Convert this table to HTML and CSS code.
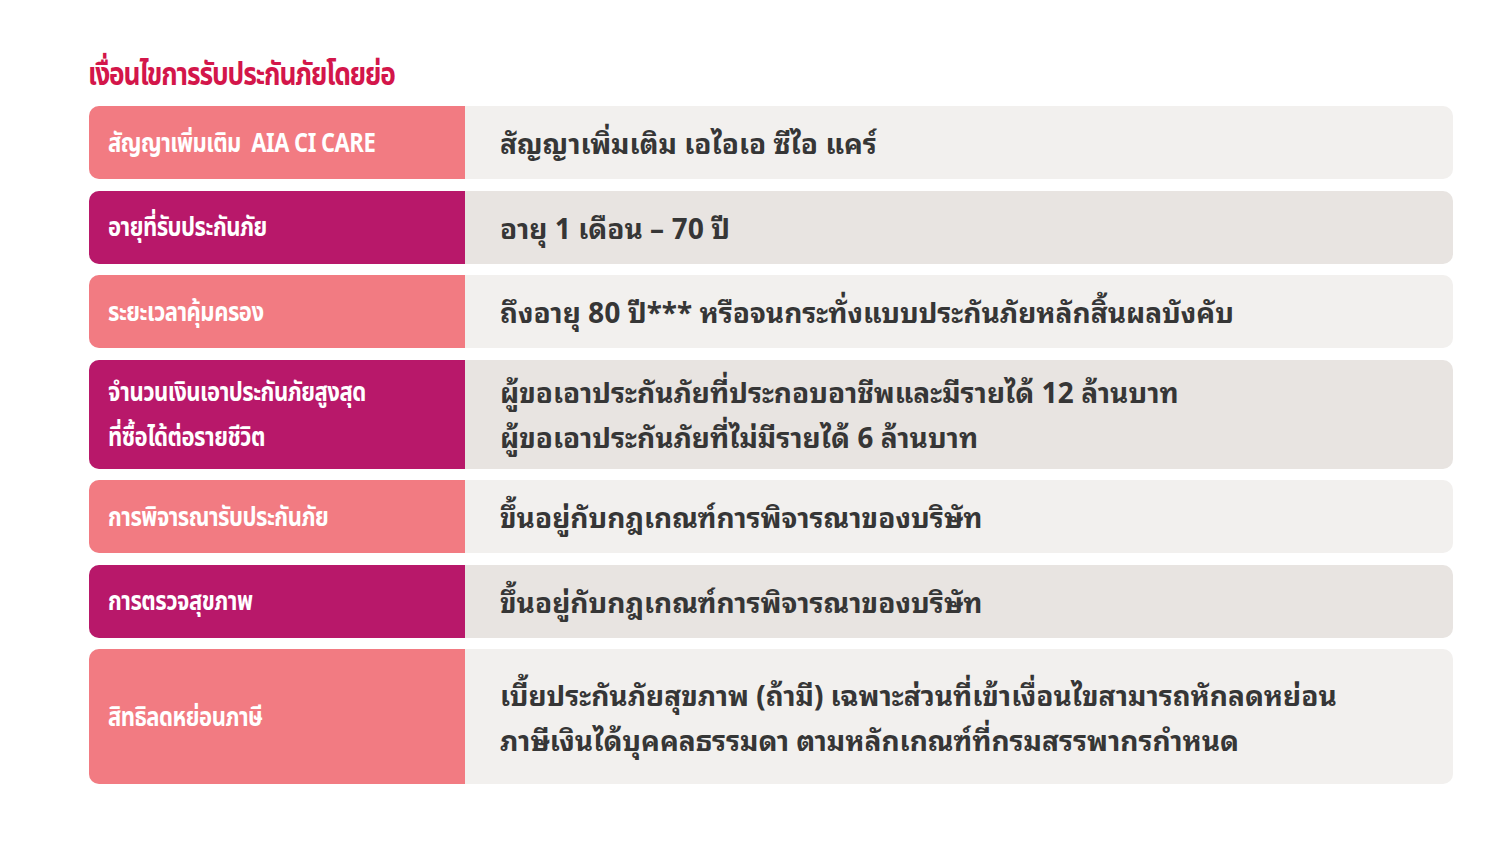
FILE: index.html
```html
<!DOCTYPE html>
<html lang="th">
<head>
<meta charset="utf-8">
<title>เงื่อนไขการรับประกันภัยโดยย่อ</title>
<link rel="stylesheet" href="styles.css">
</head>
<body>
<main class="page">
  <h1 class="title"><span class="narrow">เงื่อนไขการรับประกันภัยโดยย่อ</span></h1>
  <div class="table">
    <div class="row light h73">
      <div class="label pink"><span class="narrow">สัญญาเพิ่มเติม&nbsp; AIA CI CARE</span></div>
      <div class="value">สัญญาเพิ่มเติม เอไอเอ ซีไอ แคร์</div>
    </div>
    <div class="row dark h73">
      <div class="label magenta"><span class="narrow">อายุที่รับประกันภัย</span></div>
      <div class="value">อายุ 1 เดือน – 70 ปี</div>
    </div>
    <div class="row light h73">
      <div class="label pink"><span class="narrow">ระยะเวลาคุ้มครอง</span></div>
      <div class="value">ถึงอายุ 80 ปี*** หรือจนกระทั่งแบบประกันภัยหลักสิ้นผลบังคับ</div>
    </div>
    <div class="row dark h109">
      <div class="label magenta"><span class="narrow">จำนวนเงินเอาประกันภัยสูงสุด<br>ที่ซื้อได้ต่อรายชีวิต</span></div>
      <div class="value">ผู้ขอเอาประกันภัยที่ประกอบอาชีพและมีรายได้ 12 ล้านบาท<br>ผู้ขอเอาประกันภัยที่ไม่มีรายได้ 6 ล้านบาท</div>
    </div>
    <div class="row light h73">
      <div class="label pink"><span class="narrow">การพิจารณารับประกันภัย</span></div>
      <div class="value">ขึ้นอยู่กับกฎเกณฑ์การพิจารณาของบริษัท</div>
    </div>
    <div class="row dark h73">
      <div class="label magenta"><span class="narrow">การตรวจสุขภาพ</span></div>
      <div class="value">ขึ้นอยู่กับกฎเกณฑ์การพิจารณาของบริษัท</div>
    </div>
    <div class="row light h135">
      <div class="label pink"><span class="narrow">สิทธิลดหย่อนภาษี</span></div>
      <div class="value">เบี้ยประกันภัยสุขภาพ (ถ้ามี) เฉพาะส่วนที่เข้าเงื่อนไขสามารถหักลดหย่อน<br>ภาษีเงินได้บุคคลธรรมดา ตามหลักเกณฑ์ที่กรมสรรพากรกำหนด</div>
    </div>
  </div>
</main>
</body>
</html>
```

FILE: styles.css
```css
html, body {
  margin: 0;
  padding: 0;
  background: #ffffff;
}
body {
  font-family: "Noto Sans Thai", "Noto Sans", "DejaVu Sans", sans-serif;
}
.page {
  width: 1500px;
  height: 847px;
  box-sizing: border-box;
  padding: 58px 47px 0 89px;
}
.narrow {
  display: inline-block;
  transform: scaleX(0.85);
  transform-origin: left center;
  white-space: nowrap;
}
.title {
  margin: 0 0 12px -1px;
  font-size: 31px;
  line-height: 36px;
  font-weight: 700;
  color: #d3164a;
  letter-spacing: -1.3px;
}
.table {
  display: flex;
  flex-direction: column;
  gap: 11.5px;
}
.row {
  display: flex;
  border-radius: 10px;
  overflow: hidden;
}
.h73 { height: 73px; }
.h109 { height: 109px; }
.h135 { height: 135px; }
.light { background: #f2f0ee; }
.dark { background: #e8e4e1; }
.label {
  width: 376px;
  flex: none;
  box-sizing: border-box;
  padding-left: 19px;
  padding-top: 3px;
  display: flex;
  align-items: center;
  color: #ffffff;
  font-size: 26px;
  line-height: 45px;
  font-weight: 700;
  letter-spacing: -0.6px;
}
.pink { background: #f27b82; }
.magenta { background: #b8186a; }
.value {
  flex: 1;
  padding-left: 35px;
  padding-bottom: 2px;
  display: flex;
  align-items: center;
  color: #363636;
  font-family: "Noto Sans Thai Looped", "Loma", "Garuda", "Noto Sans Thai", "Noto Sans", sans-serif;
  font-size: 28px;
  line-height: 45px;
  font-weight: 700;
}
```
